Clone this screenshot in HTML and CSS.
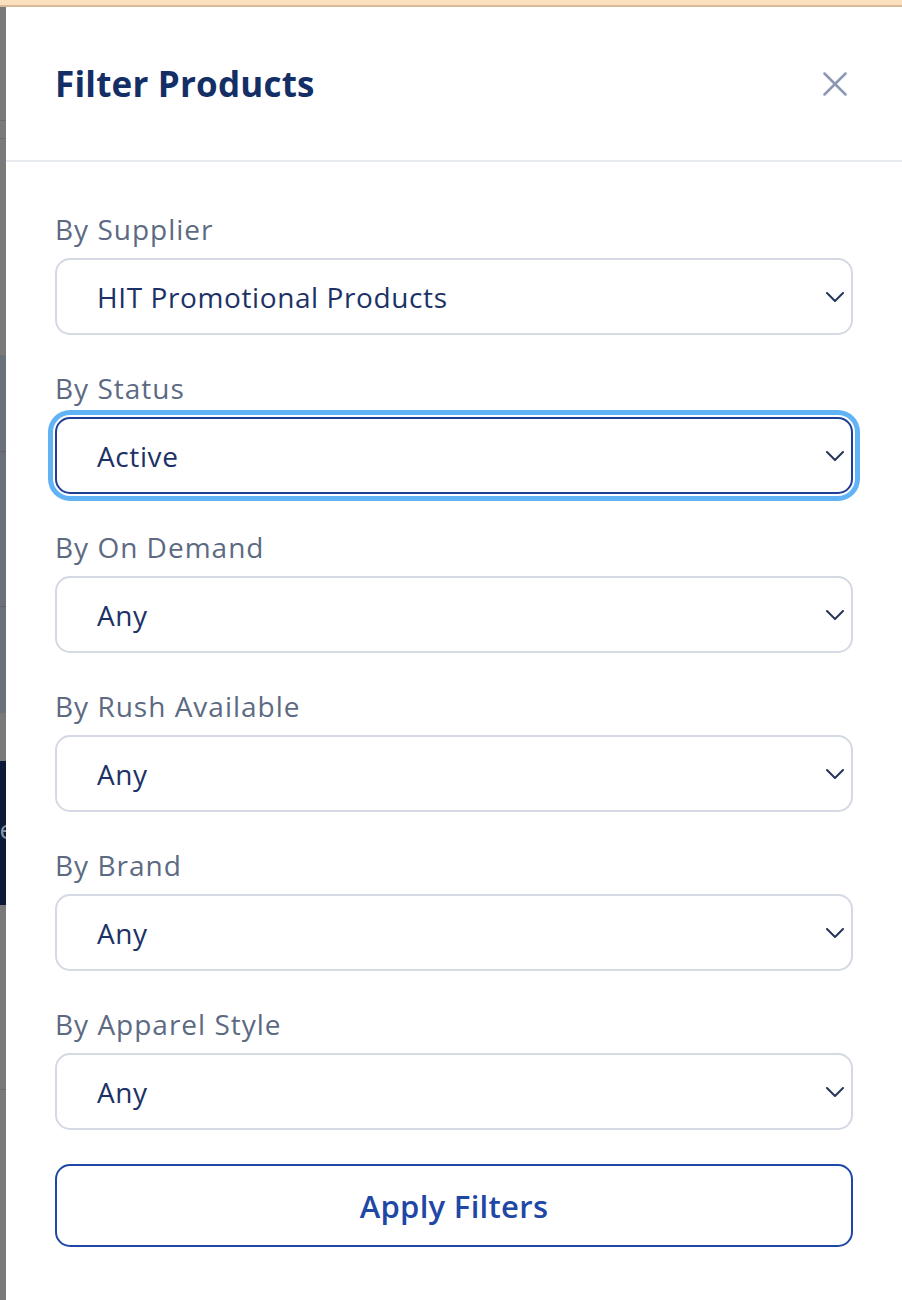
FILE: index.html
```html
<!DOCTYPE html>
<html lang="en">
<head>
<meta charset="utf-8">
<title>Filter Products</title>
<link rel="stylesheet" href="styles.css">
</head>
<body>
<div class="topbar"></div>
<div class="stage">
  <div class="backdrop">
    <div class="seg gray h114"></div>
    <div class="seg line-g"></div>
    <div class="seg gray h17"></div>
    <div class="seg line-g"></div>
    <div class="seg gray h216"></div>
    <div class="seg slate h96"></div>
    <div class="seg line-s"></div>
    <div class="seg slate h154"></div>
    <div class="seg line-s"></div>
    <div class="seg slate h106"></div>
    <div class="seg gray h48"></div>
    <div class="seg navy h144"><span class="cut">e</span></div>
    <div class="seg gray h185"></div>
    <div class="seg line-g"></div>
    <div class="seg gray fill"></div>
  </div>
  <aside class="panel">
    <header class="panel-header">
      <h1 class="panel-title">Filter Products</h1>
      <button class="close-btn" type="button" aria-label="Close">
        <svg width="24" height="24" viewBox="0 0 24 24" fill="none" stroke="currentColor" stroke-width="2.5" stroke-linecap="round">
          <path d="M1.5 1.5 L22.5 22.5 M22.5 1.5 L1.5 22.5"/>
        </svg>
      </button>
    </header>
    <form class="panel-body">
      <div class="field">
        <label class="field-label">By Supplier</label>
        <div class="select">
          <span class="select-value">HIT Promotional Products</span>
          <svg class="chev" width="18" height="10" viewBox="0 0 18 10" fill="none" stroke="currentColor" stroke-width="2" stroke-linecap="round" stroke-linejoin="round"><path d="M1 1 L9 9 L17 1"/></svg>
        </div>
      </div>
      <div class="field">
        <label class="field-label">By Status</label>
        <div class="select focused">
          <span class="select-value">Active</span>
          <svg class="chev" width="18" height="10" viewBox="0 0 18 10" fill="none" stroke="currentColor" stroke-width="2" stroke-linecap="round" stroke-linejoin="round"><path d="M1 1 L9 9 L17 1"/></svg>
        </div>
      </div>
      <div class="field">
        <label class="field-label">By On Demand</label>
        <div class="select">
          <span class="select-value">Any</span>
          <svg class="chev" width="18" height="10" viewBox="0 0 18 10" fill="none" stroke="currentColor" stroke-width="2" stroke-linecap="round" stroke-linejoin="round"><path d="M1 1 L9 9 L17 1"/></svg>
        </div>
      </div>
      <div class="field">
        <label class="field-label">By Rush Available</label>
        <div class="select">
          <span class="select-value">Any</span>
          <svg class="chev" width="18" height="10" viewBox="0 0 18 10" fill="none" stroke="currentColor" stroke-width="2" stroke-linecap="round" stroke-linejoin="round"><path d="M1 1 L9 9 L17 1"/></svg>
        </div>
      </div>
      <div class="field">
        <label class="field-label">By Brand</label>
        <div class="select">
          <span class="select-value">Any</span>
          <svg class="chev" width="18" height="10" viewBox="0 0 18 10" fill="none" stroke="currentColor" stroke-width="2" stroke-linecap="round" stroke-linejoin="round"><path d="M1 1 L9 9 L17 1"/></svg>
        </div>
      </div>
      <div class="field">
        <label class="field-label">By Apparel Style</label>
        <div class="select">
          <span class="select-value">Any</span>
          <svg class="chev" width="18" height="10" viewBox="0 0 18 10" fill="none" stroke="currentColor" stroke-width="2" stroke-linecap="round" stroke-linejoin="round"><path d="M1 1 L9 9 L17 1"/></svg>
        </div>
      </div>
      <button class="apply-btn" type="button">Apply Filters</button>
    </form>
  </aside>
</div>
</body>
</html>
```
FILE: styles.css
```css
* { box-sizing: border-box; }
html, body { margin: 0; padding: 0; }
body {
  width: 902px;
  height: 1300px;
  overflow: hidden;
  display: flex;
  flex-direction: column;
  font-family: "Open Sans", "Liberation Sans", sans-serif;
  background: #fff;
}
.topbar {
  height: 7px;
  flex: none;
  background: #fbe0bd;
  border-bottom: 2px solid #d8bb98;
}
.stage {
  flex: 1;
  display: flex;
  min-height: 0;
}
.backdrop {
  width: 6px;
  flex: none;
  display: flex;
  flex-direction: column;
  overflow: hidden;
}
.seg { flex: none; width: 6px; }
.gray { background: #7a7a7a; }
.slate { background: #6b7179; }
.navy { background: #0c1a37; display: flex; align-items: center; justify-content: flex-end; overflow: hidden; }
.line-g { height: 1px; background: #6c6c6c; }
.line-s { height: 1px; background: #5e636b; }
.h114 { height: 113px; }
.h17 { height: 17px; }
.h216 { height: 216px; }
.h96 { height: 96px; }
.h154 { height: 154px; }
.h106 { height: 106px; }
.h48 { height: 48px; }
.h144 { height: 144px; }
.h185 { height: 184px; }
.fill { flex: 1; }
.cut {
  color: #8a93a6;
  font-size: 26px;
  line-height: 1;
  margin-right: -8px;
  margin-top: -8px;
}

.panel {
  flex: 1;
  background: #fff;
  display: flex;
  flex-direction: column;
}
.panel-header {
  height: 155px;
  flex: none;
  display: flex;
  align-items: center;
  justify-content: space-between;
  padding: 0 55px 0 49px;
  border-bottom: 2px solid #e6e9ee;
}
.panel-title {
  margin: 0;
  font-size: 35px;
  font-weight: 700;
  color: #142f66;
  letter-spacing: 0.2px;
}
.close-btn {
  border: 0;
  background: none;
  padding: 0;
  width: 24px;
  height: 24px;
  color: #8c98b3;
  display: flex;
}
.panel-body {
  padding: 48px 49px 0 49px;
  margin: 0;
  display: flex;
  flex-direction: column;
}
.field {
  display: flex;
  flex-direction: column;
  margin-bottom: 34px;
}
.field-label {
  height: 38px;
  line-height: 38px;
  margin-bottom: 10px;
  font-size: 28px;
  color: #5c6a82;
  letter-spacing: 1px;
}
.select {
  height: 77px;
  border: 2px solid #d5d9e3;
  border-radius: 15px;
  display: flex;
  align-items: center;
  justify-content: space-between;
  padding: 0 7px 0 40px;
  background: #fff;
}
.select.focused {
  border-color: #1f3f97;
  box-shadow: 0 0 0 2px #fff, 0 0 0 7px #62b3f5;
}
.select-value {
  font-size: 28px;
  color: #1c3266;
  letter-spacing: 0.6px;
}
.chev {
  color: #26355a;
  flex: none;
}
.apply-btn {
  height: 83px;
  border: 2px solid #1f48a6;
  border-radius: 15px;
  background: #fff;
  color: #1f48a6;
  font-family: "Open Sans", "Liberation Sans", sans-serif;
  font-size: 31px;
  font-weight: 600;
  letter-spacing: 0.3px;
  padding: 0;
}
```
